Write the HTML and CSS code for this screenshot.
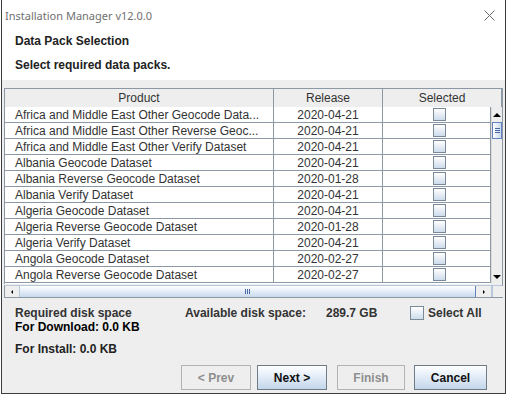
FILE: index.html
```html
<!DOCTYPE html>
<html lang="en">
<head>
    <meta charset="UTF-8">
    <title>Installation Manager v12.0.0</title>
    <link rel="stylesheet" href="styles.css">
</head>
<body>
    <div class="window">
        <div class="titlebar">
            <span class="title">Installation Manager v12.0.0</span>
            <svg class="close" width="11" height="11" viewBox="0 0 11 11">
                <path d="M0.5 0.5 L10.5 10.5 M10.5 0.5 L0.5 10.5" stroke="#6a6a6a" stroke-width="1" fill="none"/>
            </svg>
        </div>

        <div class="banner">
            <h1>Data Pack Selection</h1>
            <p>Select required data packs.</p>
        </div>

        <div class="content">
            <div class="scroll-pane">
                <div class="table-head">
                    <div class="th">Product</div>
                    <div class="th">Release</div>
                    <div class="th">Selected</div>
                </div>
                <div class="table-body">
                    <div class="rows" id="rows"></div>
                    <div class="vscroll">
                        <div class="arrow-btn"><span class="tri up"></span></div>
                        <div class="vthumb"><span class="grip-v"></span></div>
                        <div class="vtrack"></div>
                        <div class="arrow-btn"><span class="tri down"></span></div>
                    </div>
                </div>
                <div class="hscroll">
                    <div class="harrow"><span class="tri left"></span></div>
                    <div class="hthumb"><span class="grip-h"></span></div>
                    <div class="harrow"><span class="tri right"></span></div>
                    <div class="corner"></div>
                </div>
            </div>

            <div class="summary">
                <div class="summary-top">
                    <span class="req">Required disk space</span>
                    <span class="avail">Available disk space:</span>
                    <span class="size">289.7 GB</span>
                    <label class="select-all"><span class="check"></span>Select All</label>
                </div>
                <div class="download">For Download: 0.0 KB</div>
                <div class="install">For Install: 0.0 KB</div>
            </div>

            <div class="buttons">
                <button class="btn prev" disabled>&lt; Prev</button>
                <button class="btn next">Next &gt;</button>
                <button class="btn finish" disabled>Finish</button>
                <button class="btn cancel">Cancel</button>
            </div>
        </div>
    </div>

    <script>
        const packs = [
            ["Africa and Middle East Other Geocode Data...", "2020-04-21"],
            ["Africa and Middle East Other Reverse Geoc...", "2020-04-21"],
            ["Africa and Middle East Other Verify Dataset", "2020-04-21"],
            ["Albania Geocode Dataset", "2020-04-21"],
            ["Albania Reverse Geocode Dataset", "2020-01-28"],
            ["Albania Verify Dataset", "2020-04-21"],
            ["Algeria Geocode Dataset", "2020-04-21"],
            ["Algeria Reverse Geocode Dataset", "2020-01-28"],
            ["Algeria Verify Dataset", "2020-04-21"],
            ["Angola Geocode Dataset", "2020-02-27"],
            ["Angola Reverse Geocode Dataset", "2020-02-27"]
        ];

        const rows = document.getElementById("rows");
        packs.forEach(function (p) {
            const row = document.createElement("div");
            row.className = "row";
            row.innerHTML =
                '<div class="td product">' + p[0] + '</div>' +
                '<div class="td release">' + p[1] + '</div>' +
                '<div class="td selected"><span class="check"></span></div>';
            rows.appendChild(row);
        });
    </script>
</body>
</html>
```

FILE: styles.css
```css
body {
    margin: 0;
    background: #ffffff;
    font-family: 'Liberation Sans', Arial, sans-serif;
    font-size: 12px;
    color: #333333;
}
.window {
    margin-left: 1px;
    width: 505px;
    height: 394px;
    border: 1px solid #3c3c3c;
    border-top: none;
    box-sizing: border-box;
    display: flex;
    flex-direction: column;
    background: #eeeeee;
}
.titlebar {
    height: 30px;
    background: #ffffff;
    display: flex;
    align-items: center;
    justify-content: space-between;
    padding: 0 10px 0 3px;
}
.title {
    font-family: 'Noto Sans', sans-serif;
    font-size: 11px;
    color: #707070;
}
.close {
    display: block;
}
.banner {
    height: 50px;
    background: #ffffff;
    padding: 0 0 0 13px;
    box-sizing: border-box;
}
.banner h1, .banner p {
    margin: 0;
    font-size: 12px;
    font-weight: bold;
    color: #222222;
}
.banner h1 {
    padding-top: 4px;
    line-height: 14px;
}
.banner p {
    padding-top: 10px;
    line-height: 14px;
}
.content {
    flex: 1;
    padding: 8px 2px 0 2px;
}

/* table */
.scroll-pane {
    width: 499px;
    border-right: 1px solid #8c98a4;
    box-sizing: border-box;
}
.table-head {
    display: grid;
    grid-template-columns: 270px 109px 119px;
    height: 19px;
}
.th {
    border: 1px solid #8c98a4;
    border-left: none;
    text-align: center;
    line-height: 18px;
    color: #333333;
    background: #eeeeee;
}
.th:first-child {
    border-left: 1px solid #8c98a4;
}
.table-body {
    display: flex;
    height: 177px;
}
.rows {
    width: 487px;
    background: #ffffff;
    border-left: 1px solid #8c98a4;
    box-sizing: border-box;
}
.row {
    display: grid;
    grid-template-columns: 269px 109px 108px;
    height: 16px;
    border-bottom: 1px solid #8c98a4;
    box-sizing: border-box;
}
.td {
    border-right: 1px solid #8c98a4;
    line-height: 16px;
    white-space: nowrap;
    overflow: hidden;
    color: #333333;
}
.product {
    padding-left: 10px;
}
.release {
    text-align: center;
}
.selected {
    display: flex;
    justify-content: center;
    align-items: center;
    padding-left: 6px;
}
.check {
    display: inline-block;
    width: 11px;
    height: 11px;
    border: 1px solid #7a8a99;
    background: linear-gradient(#ffffff, #cddcec);
}

/* scrollbars */
.vscroll {
    width: 11px;
    display: flex;
    flex-direction: column;
    background: #eeeeee;
    border-left: 1px solid #dddddd;
}
.arrow-btn {
    height: 15px;
    display: flex;
    align-items: center;
    justify-content: center;
}
.vthumb {
    height: 15px;
    border: 1px solid #6382bf;
    background: linear-gradient(90deg, #ffffff, #c7d9ee);
    display: flex;
    align-items: center;
    justify-content: center;
}
.grip-v {
    width: 5px;
    height: 5px;
    background: repeating-linear-gradient(#4968a8 0 1px, transparent 1px 2px);
}
.vtrack {
    flex: 1;
}
.hscroll {
    display: grid;
    grid-template-columns: 15px 456px 16px 11px;
    height: 13px;
    border-top: 1px solid #b8c8da;
    border-bottom: 1px solid #8c98a4;
    border-left: 1px solid #8c98a4;
    box-sizing: border-box;
    margin-top: 1px;
}
.harrow {
    display: flex;
    align-items: center;
    justify-content: center;
    border-right: 1px solid #b8c8da;
    background: #eeeeee;
}
.hthumb {
    background: linear-gradient(#ffffff, #c7d9ee);
    border-right: 1px solid #6382bf;
    display: flex;
    align-items: center;
    justify-content: center;
}
.grip-h {
    width: 5px;
    height: 5px;
    background: repeating-linear-gradient(90deg, #4968a8 0 1px, transparent 1px 2px);
}
.corner {
    background: #eeeeee;
    border-left: 1px solid #b8c8da;
}
.tri {
    width: 0;
    height: 0;
    border: 4px solid transparent;
}
.tri.up {
    border-bottom: 4px solid #000000;
    border-top: none;
}
.tri.down {
    border-top: 4px solid #000000;
    border-bottom: none;
}
.tri.left {
    border-right: 2px solid #000000;
    border-width: 2px 2px 2px 0;
}
.tri.right {
    border-left: 2px solid #000000;
    border-width: 2px 0 2px 2px;
}

/* summary */
.summary {
    padding: 7px 0 0 11px;
    font-weight: bold;
}
.summary-top {
    display: flex;
    align-items: center;
    height: 15px;
    color: #333333;
}
.req {
    width: 170px;
}
.avail {
    width: 141px;
}
.size {
    width: 84px;
}
.select-all {
    display: flex;
    align-items: center;
    gap: 4px;
}
.select-all .check {
    width: 12px;
    height: 12px;
}
.download {
    color: #000000;
    line-height: 15px;
}
.install {
    color: #222222;
    margin-top: 7px;
    line-height: 15px;
}

/* buttons */
.buttons {
    display: flex;
    justify-content: flex-end;
    padding: 8px 16px 0 0;
}
.btn {
    height: 25px;
    width: 70px;
    font-family: 'Liberation Sans', Arial, sans-serif;
    font-size: 12px;
    font-weight: bold;
    color: #111111;
    border: 1px solid #6f7b87;
    border-radius: 0;
    background: linear-gradient(#ffffff, #e3edf8 45%, #c3d6ea);
    padding: 0;
}
.btn:disabled {
    color: #8e8e8e;
    border-color: #b3b3b3;
    background: #eeeeee;
}
.prev {
    margin-right: 6px;
}
.next {
    margin-right: 10px;
}
.finish {
    width: 68px;
    margin-right: 9px;
}
.cancel {
    width: 73px;
}
```
